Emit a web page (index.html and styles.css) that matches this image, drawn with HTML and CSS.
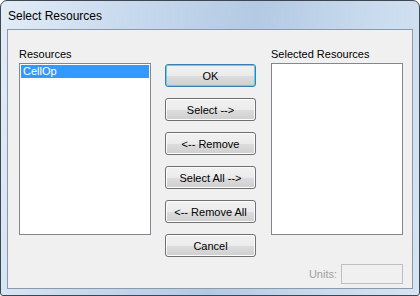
FILE: index.html
```html
<!DOCTYPE html>
<html lang="en">
<head>
    <meta charset="UTF-8">
    <title>Select Resources</title>
    <link rel="stylesheet" href="styles.css">
</head>
<body>
    <div class="window">
        <div class="titlebar">Select Resources</div>

        <div class="client">
            <div class="column">
                <div class="label">Resources</div>
                <div class="listbox">
                    <div class="item selected">CellOp</div>
                </div>
            </div>

            <div class="buttons">
                <button class="btn default">OK</button>
                <button class="btn">Select --&gt;</button>
                <button class="btn">&lt;-- Remove</button>
                <button class="btn">Select All --&gt;</button>
                <button class="btn">&lt;-- Remove All</button>
                <button class="btn">Cancel</button>
            </div>

            <div class="column">
                <div class="label">Selected Resources</div>
                <div class="listbox"></div>
                <div class="units">
                    <span class="units-label">Units:</span>
                    <input class="units-input" type="text" disabled>
                </div>
            </div>
        </div>
    </div>
</body>
</html>
```

FILE: styles.css
```css
body {
    margin: 0;
    padding: 0;
    font-family: "Liberation Sans", Arial, sans-serif;
    font-size: 11px;
    background: #fff;
}

.window {
    box-sizing: border-box;
    width: 420px;
    height: 296px;
    border: 1px solid #3d4651;
    border-radius: 7px 7px 3px 3px;
    padding: 0 6px 6px 6px;
    background: linear-gradient(100deg, #e2ecf7 0%, #c6d8ed 30%, #b3cae4 55%, #c9dbee 80%, #d6e4f3 100%);
    display: flex;
    flex-direction: column;
}

.titlebar {
    height: 28px;
    line-height: 30px;
    padding-left: 1px;
    font-family: "Liberation Sans", Arial, sans-serif;
    font-size: 12px;
    color: #000;
}

.client {
    flex: 1;
    display: flex;
    border: 1px solid #8b9aab;
    background: #f0f0f0;
    padding: 18px 8px 0 11px;
}

.column {
    width: 132px;
    display: flex;
    flex-direction: column;
}

.label {
    height: 13px;
    line-height: 13px;
    margin-bottom: 2px;
    color: #000;
}

.listbox {
    box-sizing: border-box;
    height: 172px;
    border: 1px solid #828790;
    background: #fff;
    padding: 1px;
}

.item {
    height: 13px;
    line-height: 13px;
    padding-left: 2px;
}

.item.selected {
    background: #3399ff;
    color: #fff;
}

.buttons {
    width: 91px;
    margin: 16px 15px 0 14px;
    display: flex;
    flex-direction: column;
    gap: 11px;
}

.btn {
    box-sizing: border-box;
    height: 23px;
    width: 91px;
    padding: 0;
    border: 1px solid #707070;
    border-radius: 3px;
    font-family: "Liberation Sans", Arial, sans-serif;
    font-size: 11px;
    color: #000;
    background: linear-gradient(#f2f2f2 0%, #ebebeb 50%, #dddddd 51%, #cfcfcf 100%);
    box-shadow: inset 0 0 0 1px #fcfcfc;
}

.btn.default {
    border-color: #3c7fb1;
    box-shadow: inset 0 0 0 1px #48d8fb;
}

.units {
    display: flex;
    justify-content: flex-end;
    align-items: center;
    gap: 4px;
    margin-top: 29px;
}

.units-label {
    color: #a0a0a0;
}

.units-input {
    box-sizing: border-box;
    width: 62px;
    height: 20px;
    border: 1px solid #bfbfbf;
    background: #f0f0f0;
    margin: 0;
}
```
